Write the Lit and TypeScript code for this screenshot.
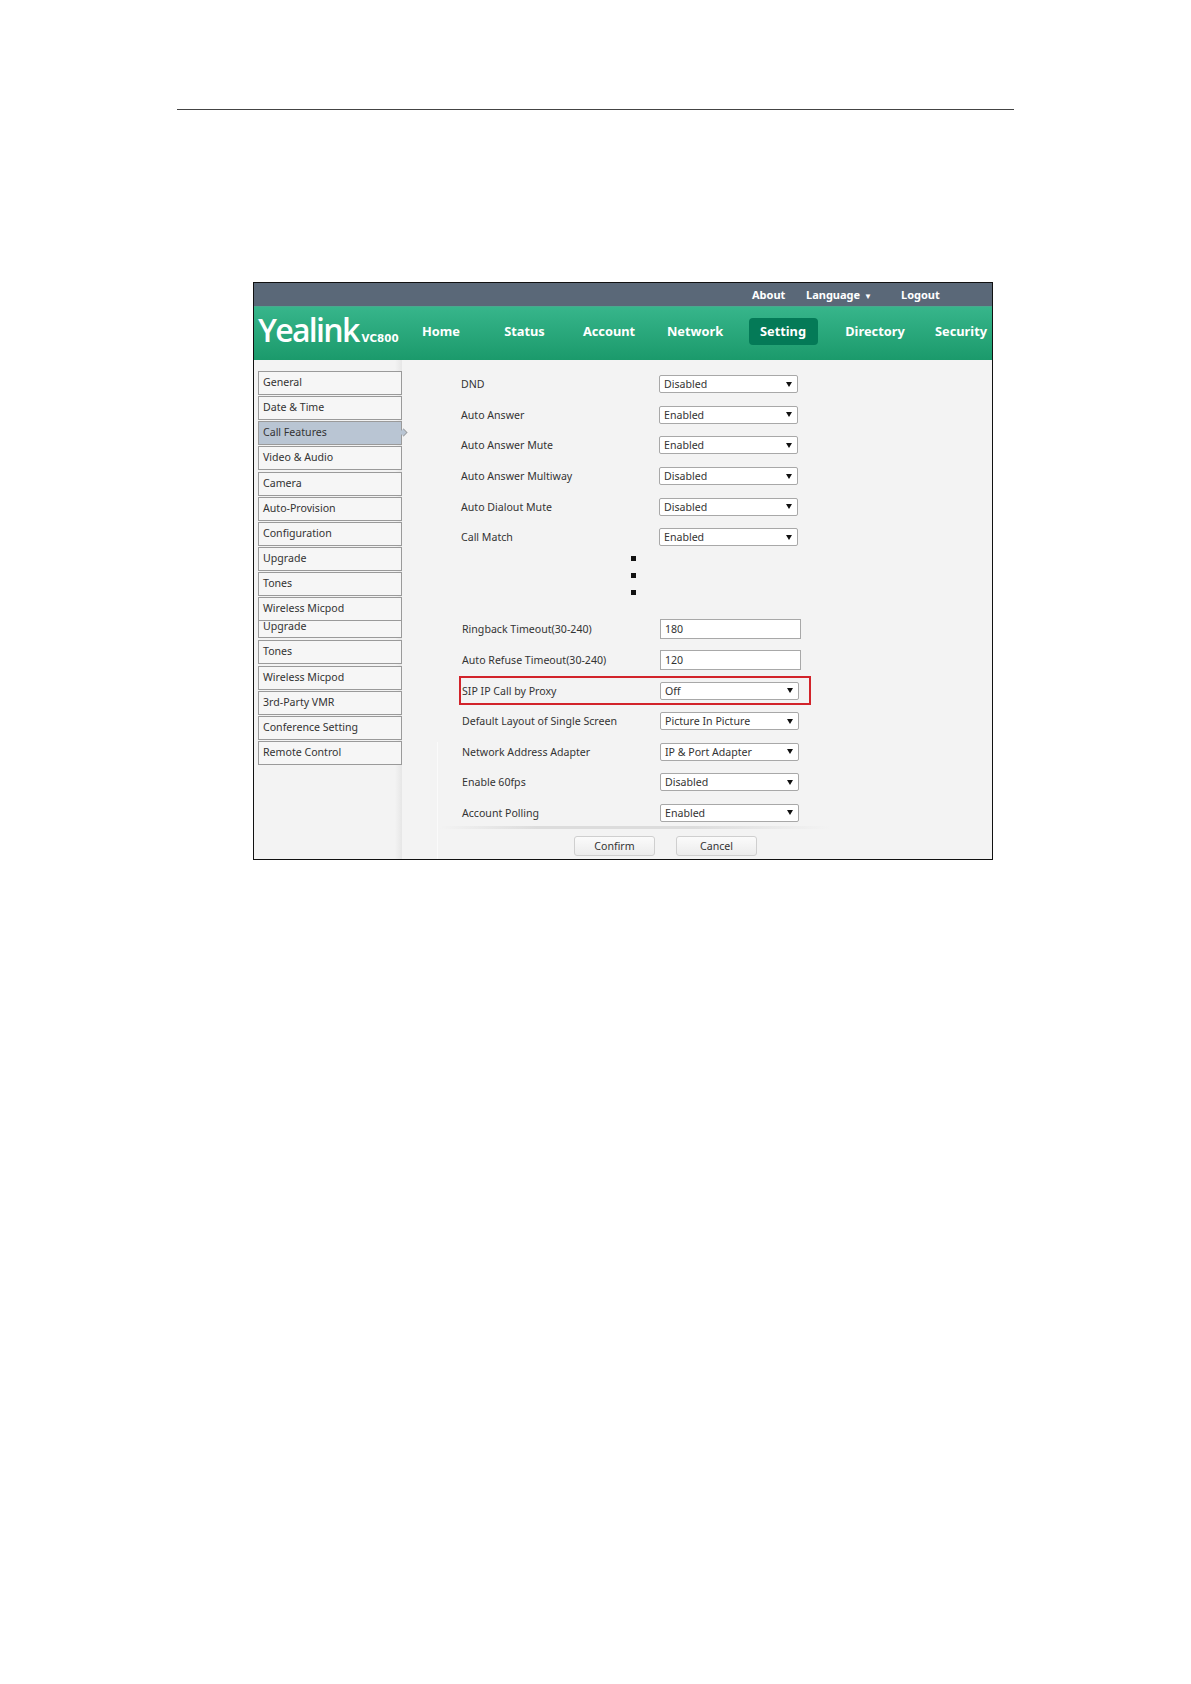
import { LitElement, html, css } from "lit";
import { customElement } from "lit/decorators.js";

const NAV = ["Home", "Status", "Account", "Network", "Setting", "Directory", "Security"];
const SIDE: [string, string][] = [
  ["General", ""], ["Date & Time", ""], ["Call Features", "active"], ["Video & Audio", ""],
  ["Camera", ""], ["Auto-Provision", ""], ["Configuration", ""], ["Upgrade", ""], ["Tones", ""],
  ["Wireless Micpod", ""], ["Upgrade", "cut"], ["Tones", ""], ["Wireless Micpod", ""],
  ["3rd-Party VMR", ""], ["Conference Setting", ""], ["Remote Control", ""],
];
const TOP: [string, string][] = [
  ["DND", "Disabled"], ["Auto Answer", "Enabled"], ["Auto Answer Mute", "Enabled"],
  ["Auto Answer Multiway", "Disabled"], ["Auto Dialout Mute", "Disabled"], ["Call Match", "Enabled"],
];
const BOTTOM: [string, string][] = [
  ["Default Layout of Single Screen", "Picture In Picture"], ["Network Address Adapter", "IP & Port Adapter"],
  ["Enable 60fps", "Disabled"], ["Account Polling", "Enabled"],
];

@customElement("app-root")
export class AppRoot extends LitElement {
  static styles = css`
    :host { display: block; height: 1684px; background: #fff; font-family: "Noto Sans", "Liberation Sans", sans-serif; color: #333; overflow: hidden; }
    .rule { margin: 109px 0 0 177px; width: 837px; height: 1px; background: #444; }
    .frame { margin: 172px 0 0 253px; width: 738px; height: 576px; border: 1.5px solid #111; background: #f3f3f3; display: flex; flex-direction: column; overflow: hidden; }
    .top { height: 23px; background: #5a6878; display: flex; align-items: center; color: #fff; font-size: 11px; font-weight: 700; padding-left: 497px; flex: none; }
    .top span:nth-child(1) { width: 54px; padding-left: 1px; }
    .top span:nth-child(2) { width: 95px; }
    .tri { font-size: 8px; }
    .head { height: 54px; flex: none; display: flex; align-items: center; color: #fff; border-top: 1px solid #4aa88e; box-sizing: border-box; background: linear-gradient(#37b58b, #1b9a6b); padding-bottom: 5px; }
    .logo { width: 146px; flex: none; display: flex; align-items: baseline; padding-left: 4px; box-sizing: border-box; margin-top: -2px; }
    .logo b { font-family: "Open Sans", sans-serif; font-weight: 600; font-size: 32px; letter-spacing: -1.7px; line-height: 40px; }
    .logo i { font-family: "DejaVu Sans", sans-serif; font-style: normal; font-weight: 700; font-size: 10.3px; margin-left: 3px; }
    .nav { display: grid; grid-template-columns: 82px 85px 84px 88px 88px 96px 76px; align-items: center; }
    .nav span { justify-self: center; font-size: 12.8px; font-weight: 700; line-height: 27px; padding: 0 10px; white-space: nowrap; }
    .nav .on { background: #047a57; border-radius: 4px; width: 69px; box-sizing: border-box; padding: 0; text-align: center; }
    .body { flex: 1; display: flex; min-height: 0; }
    .side { width: 148px; flex: none; padding: 11px 0 0 4px; box-sizing: border-box; display: flex; flex-direction: column; gap: 1.15px; position: relative; background: linear-gradient(90deg, #f3f3f3 141px, #e6e6e6 148px, #f3f3f3 150px); }
    .item { height: 24px; flex: none; box-sizing: border-box; border: 1px solid #9a9a9a; width: 144px; font-size: 10.6px; line-height: 20px; padding-left: 4px; background: #f6f6f6; white-space: nowrap; position: relative; }
    .item.active { background: #b9c5d3; }
    .item.active::after { content: ""; position: absolute; right: -6px; top: 7px; width: 7px; height: 7px; background: #b9c5d3; border: solid #9a9a9a; border-width: 1px 1px 0 0; transform: rotate(45deg) scale(.8); box-sizing: border-box; }
    .item.cut { height: 17px; border-top: 0; line-height: 11px; margin-top: -1.15px; margin-bottom: 1px; }
    .form { flex: 1; padding: 9px 0 0 59px; position: relative; display: flex; flex-direction: column; }
    .row { height: 30.6px; flex: none; display: flex; align-items: center; font-size: 10.6px; box-sizing: border-box; white-space: nowrap; }
    .label { width: 198px; flex: none; }
    .second .row { padding-left: 1px; }
    .sel, .inp { box-sizing: border-box; background: #fff; border: 1px solid #a8a8a8; height: 18px; width: 139px; border-radius: 2px; padding-left: 4px; display: flex; align-items: center; justify-content: space-between; font-size: 10.6px; color: #333; }
    .inp { width: 141px; height: 20px; border-radius: 0; }
    .caret { margin-right: 5px; width: 0; height: 0; border: solid transparent; border-width: 5px 3px 0; border-top-color: #111; }
    .dots { flex: none; display: flex; flex-direction: column; gap: 12px; padding: 3px 0 0 170px; box-sizing: border-box; height: 61.5px; }
    .dots i { width: 5px; height: 5px; background: #111; flex: none; }
    .hl { position: relative; }
    .hl::after { content: ""; position: absolute; left: -2px; top: 1px; width: 352px; height: 29px; border: 2px solid #d2232a; box-sizing: border-box; pointer-events: none; }
    .vline { position: absolute; left: 35px; top: 382px; bottom: 0; width: 1px; background: #fafafa; }
    .hline { position: absolute; left: 38px; top: 466px; width: 390px; height: 3px; background: linear-gradient(90deg, transparent, #dcdcdc 25%, #dcdcdc 65%, transparent); }
    .btns { position: absolute; left: 172px; top: 476px; display: flex; gap: 21px; }
    .btn { width: 81px; height: 20px; box-sizing: border-box; border: 1px solid #cfcfcf; border-radius: 3px; background: linear-gradient(#fbfbfb, #ececec); font-size: 10.6px; text-align: center; line-height: 18px; }
  `;

  private sel(v: string) { return html`<div class="sel"><span>${v}</span><span class="caret"></span></div>`; }

  render() {
    return html`
      <div class="rule"></div>
      <div class="frame">
        <div class="top"><span>About</span><span>Language <span class="tri">▼</span></span><span>Logout</span></div>
        <div class="head">
          <div class="logo"><b>Yealink</b><i>VC800</i></div>
          <div class="nav">${NAV.map((n) => html`<span class=${n === "Setting" ? "on" : ""}>${n}</span>`)}</div>
        </div>
        <div class="body">
          <div class="side">${SIDE.map(([t, c]) => html`<div class="item ${c}">${t}</div>`)}</div>
          <div class="form">
            ${TOP.map(([l, v]) => html`<div class="row"><span class="label">${l}</span>${this.sel(v)}</div>`)}
            <div class="dots"><i></i><i></i><i></i></div>
            <div class="second">
              <div class="row"><span class="label">Ringback Timeout(30-240)</span><div class="inp">180</div></div>
              <div class="row"><span class="label">Auto Refuse Timeout(30-240)</span><div class="inp">120</div></div>
              <div class="row hl"><span class="label">SIP IP Call by Proxy</span>${this.sel("Off")}</div>
              ${BOTTOM.map(([l, v]) => html`<div class="row"><span class="label">${l}</span>${this.sel(v)}</div>`)}
            </div>
            <div class="vline"></div>
            <div class="hline"></div>
            <div class="btns"><div class="btn">Confirm</div><div class="btn">Cancel</div></div>
          </div>
        </div>
      </div>
    `;
  }
}
